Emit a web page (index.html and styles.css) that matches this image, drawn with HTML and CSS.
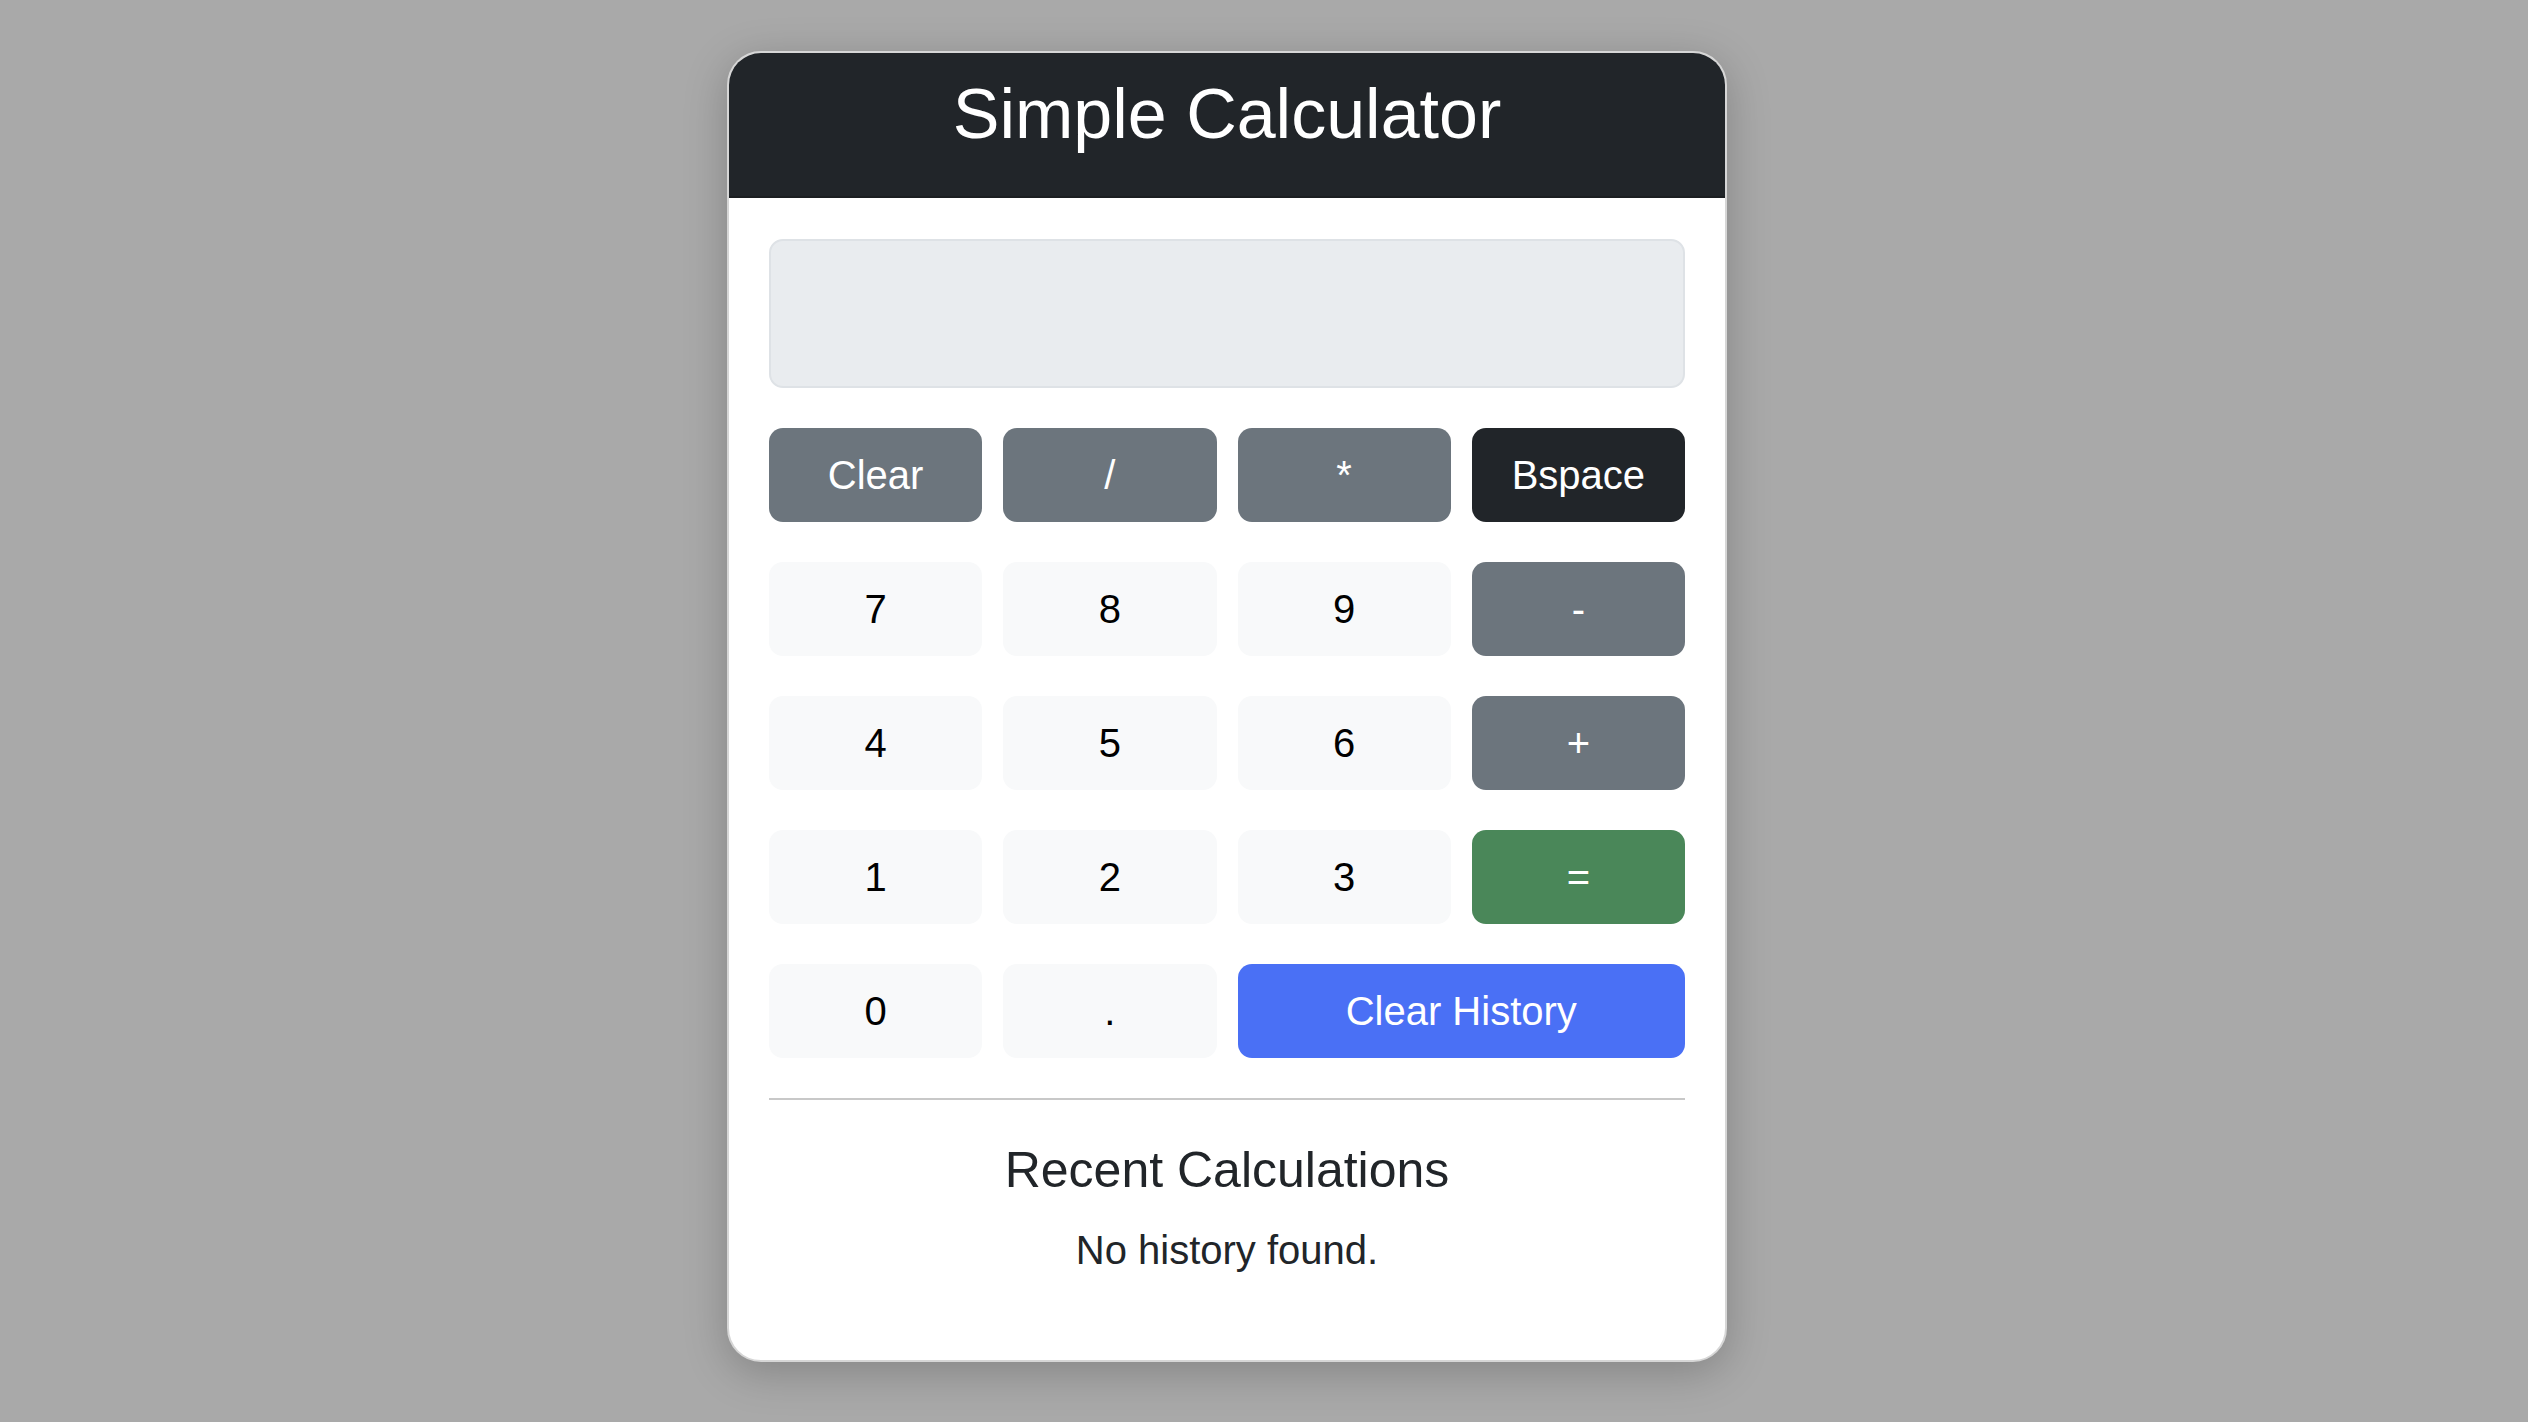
FILE: index.html
```html
<!DOCTYPE html>
<html lang="en">
<head>
<meta charset="utf-8">
<title>Simple Calculator</title>
<link rel="stylesheet" href="styles.css">
</head>
<body>
<div class="page">
  <div class="card">
    <div class="card-header">
      <h1 class="title">Simple Calculator</h1>
    </div>
    <div class="card-body">
      <div class="display"></div>
      <div class="keys">
        <button class="btn btn-secondary">Clear</button>
        <button class="btn btn-secondary">/</button>
        <button class="btn btn-secondary">*</button>
        <button class="btn btn-dark">Bspace</button>

        <button class="btn btn-light">7</button>
        <button class="btn btn-light">8</button>
        <button class="btn btn-light">9</button>
        <button class="btn btn-secondary">-</button>

        <button class="btn btn-light">4</button>
        <button class="btn btn-light">5</button>
        <button class="btn btn-light">6</button>
        <button class="btn btn-secondary">+</button>

        <button class="btn btn-light">1</button>
        <button class="btn btn-light">2</button>
        <button class="btn btn-light">3</button>
        <button class="btn btn-success">=</button>

        <button class="btn btn-light">0</button>
        <button class="btn btn-light">.</button>
        <button class="btn btn-primary span-2">Clear History</button>
      </div>
      <hr class="divider">
      <h3 class="history-title">Recent Calculations</h3>
      <p class="history-empty">No history found.</p>
    </div>
  </div>
</div>
</body>
</html>
```

FILE: styles.css
```css
* { box-sizing: border-box; }

html, body {
  margin: 0;
  padding: 0;
}

body {
  background: #a9a9a9;
  font-family: "Liberation Sans", Arial, sans-serif;
  color: #212529;
  min-height: 1422px;
}

.page {
  display: flex;
  justify-content: center;
  padding-top: 51px;
  padding-right: 74px;
}

.card {
  width: 1000px;
  background: #ffffff;
  border: 2px solid #d6d6d6;
  border-radius: 34px;
  overflow: hidden;
  box-shadow: 0 10px 44px rgba(0, 0, 0, 0.22);
}

.card-header {
  background: #212529;
  border-bottom: 2px solid #1b1e21;
  padding: 19px 20px 40px;
  text-align: center;
}

.title {
  margin: 0;
  font-size: 70px;
  font-weight: 400;
  line-height: 84px;
  color: #ffffff;
}

.card-body {
  padding: 41px 40px 40px;
}

.display {
  height: 149px;
  background: #e9ecef;
  border: 2px solid #dee2e6;
  border-radius: 14px;
}

.keys {
  margin-top: 40px;
  display: grid;
  grid-template-columns: repeat(4, 1fr);
  column-gap: 21px;
  row-gap: 40px;
}

.btn {
  height: 94px;
  border: none;
  border-radius: 14px;
  font-family: "Liberation Sans", Arial, sans-serif;
  font-size: 40px;
  line-height: 1;
  padding: 0;
  display: flex;
  align-items: center;
  justify-content: center;
}

.span-2 { grid-column: span 2; }

.btn-secondary { background: #6c757d; color: #ffffff; }
.btn-dark { background: #212529; color: #ffffff; }
.btn-light { background: #f8f9fa; color: #000000; }
.btn-success { background: #4a8759; color: #ffffff; }
.btn-primary { background: #4a70f5; color: #ffffff; }

.divider {
  margin: 40px 0 0;
  border: none;
  border-top: 2px solid #c8c8c8;
  height: 0;
}

.history-title {
  margin: 40px 0 0;
  text-align: center;
  font-size: 50px;
  font-weight: 400;
  line-height: 60px;
  color: #212529;
}

.history-empty {
  margin: 20px 0 40px;
  text-align: center;
  font-size: 40px;
  line-height: 60px;
  color: #212529;
}
```
